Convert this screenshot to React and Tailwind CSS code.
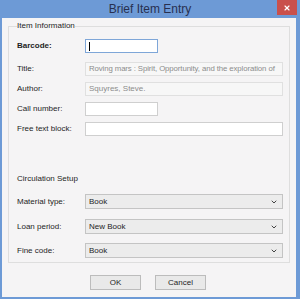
import { ChevronDown, X } from 'lucide-react';

const font = { fontFamily: '"Liberation Sans", "DejaVu Sans", sans-serif' };

const Label = ({ children, bold }) => (
  <div className={`w-[68px] shrink-0 text-[8px] text-[#1e1e1e] ${bold ? 'font-bold' : ''}`}>{children}</div>
);

const SelectBox = ({ value }) => (
  <div className="flex h-[15px] w-[198px] items-center justify-between border border-[#c4c4c4] bg-[#ececec] pl-[3px] pr-[4px] text-[8px] text-[#1e1e1e]">
    <span>{value}</span>
    <ChevronDown className="h-[8px] w-[8px] text-[#444]" strokeWidth={3} />
  </div>
);

export default function App() {
  return (
    <div style={font} className="flex h-[299px] w-[300px] flex-col bg-[#6d9ad6]">
      {/* title bar */}
      <div className="relative flex h-[18px] items-center justify-center">
        <span className="text-[12px] text-[#283050]">Brief Item Entry</span>
        <div className="absolute right-[3px] top-0 flex h-[15px] w-[20px] items-center justify-center bg-[#c9504c]">
          <X className="h-[8px] w-[8px] text-white" strokeWidth={3.5} />
        </div>
      </div>

      {/* client area */}
      <div className="mb-[2px] ml-[2px] mr-[4px] flex flex-1 flex-col bg-[#f5f4f5]">
        <fieldset className="mx-[6px] mt-[3px] h-[242px] border border-[#dedede] p-0 pl-[8px]">
          <legend className="text-[8px] leading-[10px] text-[#1e1e1e]">Item Information</legend>

          <div className="mt-[8px] flex h-[14px] items-center">
            <Label bold>Barcode:</Label>
            <div className="flex h-[14px] w-[73px] items-center border border-[#7ea6d8] bg-white pl-[3px]">
              <div className="h-[9px] w-[1px] bg-black" />
            </div>
          </div>

          <div className="mt-[9px] flex h-[14px] items-center">
            <Label>Title:</Label>
            <div className="flex h-[14px] w-[198px] items-center overflow-hidden whitespace-nowrap border border-[#e0e0e0] bg-[#f7f7f7] pl-[3px] text-[7.8px] tracking-[-0.1px] text-[#8c8c8c]">
              Roving mars : Spirit, Opportunity, and the exploration of
            </div>
          </div>

          <div className="mt-[6px] flex h-[14px] items-center">
            <Label>Author:</Label>
            <div className="flex h-[14px] w-[198px] items-center border border-[#e0e0e0] bg-[#f7f7f7] pl-[3px] text-[8px] text-[#8c8c8c]">
              Squyres, Steve.
            </div>
          </div>

          <div className="mt-[6px] flex h-[14px] items-center">
            <Label>Call number:</Label>
            <div className="h-[14px] w-[73px] border border-[#cfcfcf] bg-white" />
          </div>

          <div className="mt-[6px] flex h-[14px] items-center">
            <Label>Free text block:</Label>
            <div className="h-[14px] w-[198px] border border-[#cfcfcf] bg-white" />
          </div>

          <div className="mt-[37px] text-[8px] text-[#1e1e1e]">Circulation Setup</div>

          <div className="mt-[9px] flex h-[15px] items-center">
            <Label>Material type:</Label>
            <SelectBox value="Book" />
          </div>

          <div className="mt-[10px] flex h-[15px] items-center">
            <Label>Loan period:</Label>
            <SelectBox value="New Book" />
          </div>

          <div className="mt-[9px] flex h-[15px] items-center">
            <Label>Fine code:</Label>
            <SelectBox value="Book" />
          </div>
        </fieldset>

        <div className="mt-[12px] flex justify-center gap-[14px] pr-[2px]">
          <button className="flex h-[15px] w-[51px] items-center justify-center border border-[#bcbcbc] bg-[#e9e9e9] text-[8px] text-[#1e1e1e]">OK</button>
          <button className="flex h-[15px] w-[51px] items-center justify-center border border-[#bcbcbc] bg-[#e9e9e9] text-[8px] text-[#1e1e1e]">Cancel</button>
        </div>
      </div>
    </div>
  );
}
